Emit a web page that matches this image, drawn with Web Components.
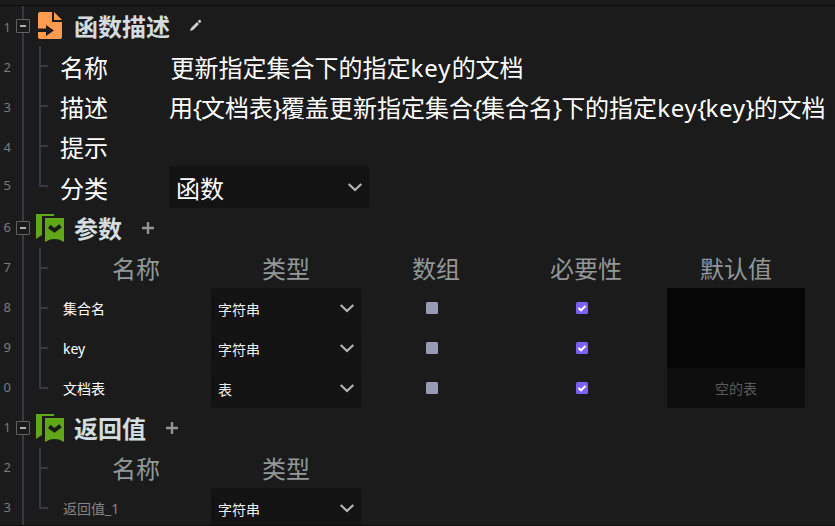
<!DOCTYPE html>
<html lang="zh-CN">
<head>
<meta charset="utf-8">
<title>函数描述</title>
<style>
html,body{margin:0;background:#1b1b1b;overflow:hidden}
body{width:835px;height:526px;font-family:"Noto Sans","Noto Sans CJK SC",sans-serif;color:#fff}
</style>
</head>
<body>
<function-sheet></function-sheet>
<script>
const define=(name,markup,setup)=>{
  customElements.define(name,class extends HTMLElement{
    constructor(){
      super();
      const t=document.createElement('template');
      t.innerHTML=markup;
      this.attachShadow({mode:'open'}).append(t.content.cloneNode(true));
    }
    connectedCallback(){ if(setup) setup(this,this.shadowRoot); }
  });
};

/* One numbered line of the tree: gutter number, trunk, branch, content. */
define('tree-row',`<style>
:host{display:grid;grid-template-columns:11px 25px minmax(0,1fr);grid-template-rows:100%;height:40px;box-sizing:border-box}
:host([tall]){height:42px}
.no{font-size:13px;line-height:var(--number-line,42px);text-align:right;color:#777b7d}
.trunk{display:grid;place-items:center;background:linear-gradient(#353941,#353941) 11px 0/2px 100% no-repeat;padding-right:1px}
.box{display:none;width:14px;height:14px;box-sizing:border-box;border:1px solid #5f6263;border-radius:1px;background:#1b1b1b;place-items:center}
.box::before{content:"";width:6px;height:2px;background:#aeb0b1}
:host([head]) .box{display:grid}
.body{display:grid;grid-template-columns:25px minmax(0,1fr);grid-template-rows:100%;min-width:0}
:host([head]) .body{grid-template-columns:minmax(0,1fr)}
.branch{display:block;width:25px;height:100%;color:#353941}
:host([head]) .branch{display:none}
.half{display:none}
:host([last]) .full{display:none}
:host([last]) .half{display:block}
.content{display:flex;align-items:center;min-width:0}
</style>
<div class="no"></div><div class="trunk"><div class="box"></div></div>
<div class="body"><svg class="branch" fill="currentColor"><rect class="full" x="3" width="2" height="100%"/><rect class="half" x="3" width="2" height="21"/><rect x="3" y="19" width="9" height="2"/></svg>
<div class="content"><slot></slot></div></div>`,(h,r)=>{r.querySelector('.no').textContent=h.getAttribute('no');});

define('section-title',`<style>
:host{display:flex;align-items:center;height:40px;width:100%}
svg{display:none}
.icon{width:38px;height:40px}
.t{font-size:24px;font-weight:700;line-height:40px;height:40px;padding-top:2px;color:#d3dcde;white-space:nowrap}
.act{width:14px;height:14px;margin-left:19px}
:host([kind=file]) .file,:host([kind=flag]) .flag{display:block}
</style>
<svg class="icon file" viewBox="0 0 38 40"><path fill="#ff9c50" d="M4 6h12v10h10v15a2 2 0 0 1-2 2H4a2 2 0 0 1-2-2V26h8v4l8-5.500-8-5.500v3.500H2V8a2 2 0 0 1 2-2zM18 6l8 8h-8z"/></svg>
<svg class="icon flag" viewBox="0 0 38 40"><path fill="#61a71a" d="M0 6h18v2H6v19L0 31zM9 10h19v24l-5-2.500q-4.500-1-9 0l-5 2.500z"/><path fill="none" stroke="#1b1b1b" stroke-width="4" d="M13.200 18.500l5.300 3.800 6-4.500"/></svg>
<div class="t"><slot></slot></div>
<svg class="act file" viewBox="0 0 14 14"><path fill="#d0d0d0" d="M1 12l1-3 6-6 2 2-6 6zM8.700 2.300l1.300-1.300a.8.8 0 0 1 1.200 0l.7.700a.8.8 0 0 1 0 1.200L10.700 4.300z"/></svg>
<svg class="act flag" viewBox="0 0 14 14"><path fill="none" stroke="#949494" stroke-width="2.400" d="M7 1v12M1 7h12"/></svg>`);

define('field-line',`<style>
:host{display:flex;font-size:24px;line-height:40px;height:40px;padding-top:2px;margin-left:-1px;box-sizing:border-box;white-space:nowrap}
.k{width:110.500px}
</style><div class="k"><slot name="k"></slot></div><div><slot></slot></div>`);

define('drop-down',`<style>
:host{display:flex;align-items:center;width:150px;height:40px;box-sizing:border-box;padding:0 6px 0 7px;background:#131313;border-radius:2px;font-size:14px;color:#f0f0f0}
:host([big]){width:200px;font-size:24px;height:42px;color:#fff}
.v{flex:1;padding-top:1px;white-space:nowrap}
svg{width:16px;height:16px}
</style><div class="v"><slot></slot></div><svg viewBox="0 0 16 16"><path d="M1.700 5l6.300 6 6.300-6" fill="none" stroke="#b5b5b5" stroke-width="2.200"/></svg>`);

define('check-mark',`<style>
:host{display:block;width:12px;height:12px;border-radius:1.500px;background:#979bb5;margin-right:8px}
:host([on]){background:#7c60ef}
svg{display:none;width:12px;height:12px}
:host([on]) svg{display:block}
</style><svg viewBox="0 0 12 12"><path d="M2.500 6l2.500 2.300 4.500-4.300" fill="none" stroke="#fff" stroke-width="2"/></svg>`);

define('param-line',`<style>
:host{display:grid;grid-template-columns:repeat(5,150px);grid-template-rows:100%;height:40px;font-size:14px}
div{display:flex;align-items:center;justify-content:center}
.name{justify-content:flex-start;padding:0 0 0 2px}
</style><div class="name"><slot name="name"></slot></div><div><slot name="type"></slot></div><div><slot name="array"></slot></div><div><slot name="need"></slot></div><div><slot name="def"></slot></div>`);

define('head-line',`<style>
:host{display:grid;grid-template-columns:repeat(5,150px);height:40px;padding-top:2px;box-sizing:border-box;font-size:24px;line-height:38px;text-align:center;color:#929899}
</style><slot></slot>`);

define('default-cell',`<style>
:host{display:flex;align-items:center;justify-content:center;width:138px;height:40px;box-sizing:border-box;background:#070707;color:#5b5b5b;font-size:14px}
:host([empty]){background:#0e0e0e}
</style><slot></slot>`);

const param=(no,name,type,extra,last)=>`<tree-row no="${no}"${last?' last':''}><param-line><span slot="name">${name}</span><drop-down slot="type">${type}</drop-down>${extra}</param-line></tree-row>`;
const extra=d=>`<check-mark slot="array"></check-mark><check-mark slot="need" on></check-mark>${d}`;
const field=(no,k,v)=>`<tree-row no="${no}"><field-line><span slot="k">${k}</span>${v}</field-line></tree-row>`;
const describe=s=>s.replace(/[{}]/g,'<i>$&</i>').replace(/key/g,'<b>key</b>');

define('function-sheet',`<style>
:host{display:flex;flex-direction:column;width:835px;height:526px;overflow:hidden;box-sizing:border-box;border-bottom:1px solid #0c0c0c}
.top{flex:none;height:6px;box-sizing:border-box;border-bottom:1px solid #0b0b0b}
tree-row{flex:none}
tree-row:nth-of-type(n+5){--number-line:38px}
.dim{color:#858585}
.wide{letter-spacing:1px}
.desc{margin-left:-1.500px}
.desc i{font-style:normal;letter-spacing:-1.100px}
.desc b{font-weight:400;letter-spacing:.7px}
</style>
<div class="top"></div>
<tree-row no="1" head><section-title kind="file">函数描述</section-title></tree-row>
${field(2,'名称','更新指定集合下的指定<span class="wide">key</span>的文档')}
${field(3,'描述','<span class="desc">'+describe('用{文档表}覆盖更新指定集合{集合名}下的指定key{key}的文档')+'</span>')}
${field(4,'提示','')}
<tree-row no="5" tall last><field-line><span slot="k">分类</span></field-line><drop-down big style="margin-left:-1.500px">函数</drop-down></tree-row>
<tree-row no="6" head><section-title kind="flag">参数</section-title></tree-row>
<tree-row no="7"><head-line><span>名称</span><span>类型</span><span>数组</span><span>必要性</span><span>默认值</span></head-line></tree-row>
${param(8,'集合名','字符串',extra('<default-cell slot="def"></default-cell>'))}
${param(9,'key','字符串',extra('<default-cell slot="def"></default-cell>'))}
${param(0,'文档表','表',extra('<default-cell slot="def" empty>空的表</default-cell>'),true)}
<tree-row no="1" head><section-title kind="flag">返回值</section-title></tree-row>
<tree-row no="2"><head-line><span>名称</span><span>类型</span></head-line></tree-row>
${param(3,'<span class="dim">返回值_1</span>','字符串','',true)}`);
</script>
</body>
</html>
